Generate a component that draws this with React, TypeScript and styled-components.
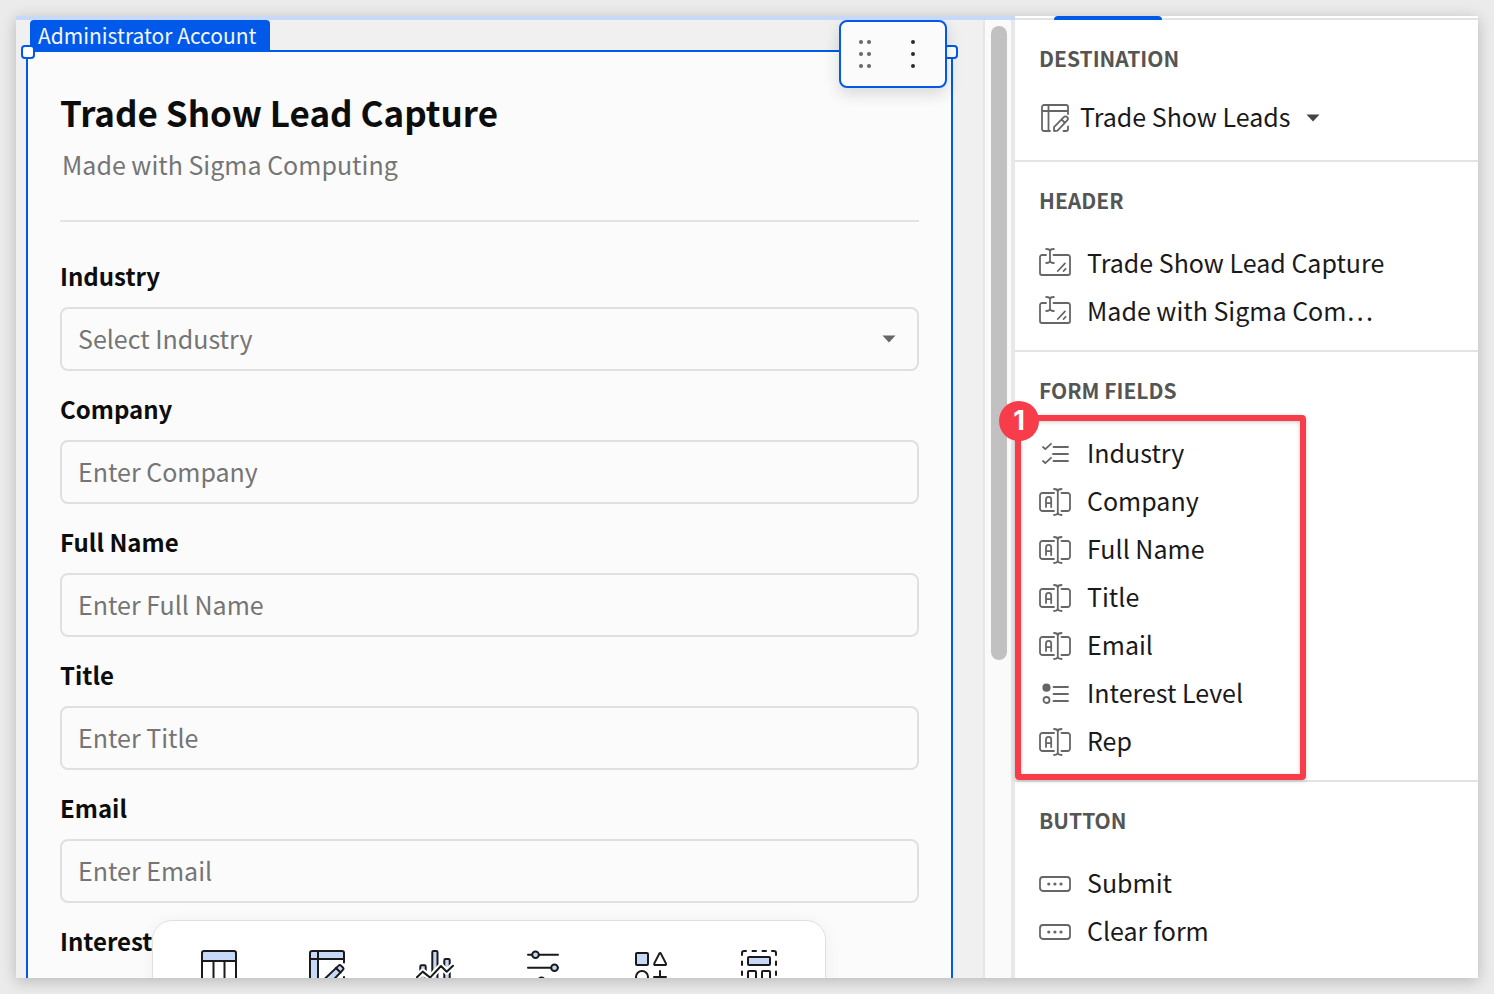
import React from "react";
import styled, { createGlobalStyle } from "styled-components";

const GlobalStyle = createGlobalStyle`
  *, *::before, *::after { box-sizing: border-box; }
  body {
    margin: 0;
    background: #ebebeb;
    color: #1a1a1a;
    font-family: "Noto Sans CJK SC", "Noto Sans", sans-serif;
  }
  button, input, select { font: inherit; color: inherit; }
`;

const BLUE = "#0059e8";
const RED = "#f73d4a";
const LINE = "#e3e3e3";
const TINT = "#c8d8f8";

const Page = styled.div`
  height: 100vh;
  padding: 16px;
`;

const Window = styled.div`
  display: flex;
  height: 100%;
  box-shadow: 0 3px 14px rgba(0, 0, 0, 0.22);
`;

const Workspace = styled.main`
  position: relative;
  display: flex;
  flex: 1;
  min-width: 0;
  overflow: hidden;
  border-top: 4px solid ${TINT};
  background: #f0f0f0;
`;

const Canvas = styled.div`
  flex: 1;
  min-width: 0;
  padding: 0 30px 0 10px;
`;

const ElementTag = styled.div`
  width: fit-content;
  margin-left: 4px;
  padding: 0 13px 0 8px;
  border-radius: 4px 4px 0 0;
  background: ${BLUE};
  color: #f2f6ff;
  font-size: 21px;
  line-height: 30px;
`;

const FormCard = styled.form`
  position: relative;
  height: 1100px;
  padding: 32px;
  border: 2px solid ${BLUE};
  background: #fbfbfb;
`;

const ResizeHandle = styled.span<{ $side: "left" | "right" }>`
  position: absolute;
  top: -7px;
  ${(p) => p.$side}: -7px;
  width: 14px;
  height: 14px;
  border: 2px solid ${BLUE};
  border-radius: 4px;
  background: #fff;
`;

const ElementActions = styled.div`
  position: absolute;
  top: -32px;
  right: 4px;
  display: flex;
  align-items: center;
  gap: 39px;
  width: 108px;
  height: 68px;
  padding-left: 17px;
  border: 2px solid ${BLUE};
  border-radius: 8px;
  background: #fbfbfb;
  box-shadow: 0 6px 16px rgba(0, 0, 0, 0.14);
`;

const IconButton = styled.button`
  display: flex;
  padding: 0;
  border: 0;
  background: none;
`;

const FormTitle = styled.h1`
  margin: 0;
  color: #0d0d0d;
  font-size: 35px;
  font-weight: 700;
  line-height: 56px;
`;

const FormSubtitle = styled.p`
  margin: 4px 0 0 2px;
  color: #757575;
  font-size: 25px;
  line-height: 40px;
`;

const Divider = styled.hr`
  height: 2px;
  margin: 36px 0 34px;
  border: 0;
  background: ${LINE};
`;

const Field = styled.div`
  position: relative;
  display: flex;
  flex-direction: column;
  gap: 11px;
  margin-bottom: 18px;
`;

const FieldLabel = styled.label`
  color: #0d0d0d;
  font-size: 24px;
  font-weight: 700;
  line-height: 40px;
`;

const TextBox = styled.input`
  width: 100%;
  height: 64px;
  padding: 0 16px 2px;
  border: 2px solid #e0e0e0;
  border-radius: 8px;
  background: #fbfbfb;
  font-size: 25px;
  &::placeholder { color: #757575; opacity: 1; }
`;

const SelectBox = styled.select`
  width: 100%;
  height: 64px;
  padding: 0 16px 2px;
  border: 2px solid #e0e0e0;
  border-radius: 8px;
  background: #fbfbfb;
  color: #757575;
  font-size: 25px;
  appearance: none;
`;

const SelectCaret = styled.span`
  position: absolute;
  right: 23px;
  bottom: 28px;
  display: flex;
  pointer-events: none;
`;

const ScrollTrack = styled.div`
  width: 32px;
  padding: 6px 4px 0 6px;
  border-left: 2px solid #e6e6e6;
  border-right: 4px solid #e8e8e8;
  background: #fafafa;
`;

const ScrollThumb = styled.div`
  width: 16px;
  height: 634px;
  border-radius: 8px;
  background: #c1c1c1;
`;

const InsertBar = styled.div`
  position: absolute;
  right: 54px;
  bottom: -42px;
  left: 0;
  display: flex;
  gap: 72px;
  width: fit-content;
  height: 100px;
  margin: 0 auto;
  padding: 29px 48px;
  border: 1px solid #e0e0e0;
  border-radius: 20px;
  background: #fff;
  box-shadow: 0 2px 16px rgba(0, 0, 0, 0.06);
`;

const Sidebar = styled.aside`
  position: relative;
  flex: none;
  width: 463px;
  background: #fff;
`;

const TabStrip = styled.div`
  height: 4px;
  padding-left: 39px;
  box-shadow: inset 0 -2px ${LINE};
`;

const ActiveTab = styled.div`
  width: 108px;
  height: 4px;
  border-radius: 4px 4px 0 0;
  background: ${BLUE};
`;

const Section = styled.section`
  padding: 23px 24px 14px;
  & + & { border-top: 2px solid ${LINE}; }
`;

const SectionTitle = styled.h2`
  margin: 0 0 25px;
  color: #555;
  font-size: 21px;
  font-weight: 700;
  line-height: 30px;
`;

const Destination = styled.button`
  display: flex;
  align-items: center;
  height: 48px;
  margin: -4px 0 4px;
  padding: 0 2px;
  border: 0;
  background: none;
  font-size: 25px;
  white-space: nowrap;
`;

const DestinationName = styled.span`
  margin: 0 16px 0 11px;
  padding-bottom: 4px;
`;

const ItemList = styled.ul`
  position: relative;
  margin: 0;
  padding: 0;
  list-style: none;
`;

const Item = styled.li`
  display: flex;
  align-items: center;
  gap: 16px;
  height: 48px;
  font-size: 25px;
  white-space: nowrap;
`;

const ItemName = styled.span`
  padding-bottom: 4px;
`;

const Callout = styled.li`
  position: absolute;
  top: -15px;
  bottom: -14px;
  left: -24px;
  width: 291px;
  border: 6px solid ${RED};
  border-radius: 4px;
  box-shadow: 0 1px 4px rgba(0, 0, 0, 0.2), inset 0 1px 4px rgba(0, 0, 0, 0.2);
  pointer-events: none;
`;

const CalloutBadge = styled.span`
  position: absolute;
  top: -20px;
  left: -22px;
  width: 40px;
  height: 40px;
  border-radius: 50%;
  background: ${RED};
  color: #fff;
  font-family: Inter, sans-serif;
  font-size: 27px;
  font-weight: 700;
  line-height: 40px;
  text-align: center;
`;

const Caret = ({ color }: { color: string }) => (
  <svg width="14" height="8" viewBox="0 0 14 8" aria-hidden="true">
    <path d="M0.5 0.5h13L7 7.5z" fill={color} />
  </svg>
);

const Glyph = ({ children, size = 32 }: { children: React.ReactNode; size?: number }) => (
  <svg width={size} height={size} viewBox={`0 0 ${size} ${size}`} fill="none" stroke="#666" strokeWidth="1.8" strokeLinecap="round" strokeLinejoin="round" aria-hidden="true">
    {children}
  </svg>
);

const icons = {
  text: (
    <Glyph>
      <path d="M7 7H3a2 2 0 0 0-2 2v16a2 2 0 0 0 2 2h26a2 2 0 0 0 2-2V9a2 2 0 0 0-2-2H14.5" />
      <path d="M7.2 1c2.6 0 3.8.7 3.8 2.2v9.6c0 1.5-1.2 2.2-3.8 2.2M14.8 1C12.2 1 11 1.7 11 3.2M11 12.8c0 1.5 1.2 2.2 3.8 2.2" />
      <path d="M18.8 23l7.2-7.600M24.600 23l2-2.200" />
    </Glyph>
  ),
  input: (
    <Glyph>
      <path d="M15 7H3.500A2.500 2.500 0 0 0 1 9.500v13A2.500 2.500 0 0 0 3.500 25H15" />
      <path d="M22.500 7h6A2.500 2.500 0 0 1 31 9.500v13a2.500 2.500 0 0 1-2.500 2.500h-6" />
      <path d="M15 3c2.600 0 3.800.800 3.800 2.400v21.200c0 1.600-1.200 2.400-3.800 2.400M22.600 3c-2.600 0-3.800.800-3.800 2.400M18.800 26.600c0 1.600 1.200 2.400 3.800 2.400" />
      <path d="M7 21v-7.500a2.600 2.600 0 0 1 5.200 0V21M7 17.200h5.200" />
    </Glyph>
  ),
  checklist: (
    <Glyph>
      <path d="M4 9l2.300 2.200L12 5.800M4 23l2.300 2.200L12 19.800M14.500 9H29M14 16h15M14.500 23H29" />
    </Glyph>
  ),
  radio: (
    <Glyph>
      <circle cx="7.500" cy="9.700" r="3.200" fill="#666" />
      <circle cx="7.500" cy="22" r="3" />
      <path d="M14.500 9H29M14.500 16H29M14.500 23H29" />
    </Glyph>
  ),
  button: (
    <Glyph>
      <rect x="1" y="9" width="30" height="14" rx="3" />
      <g fill="#666" stroke="none">
        <circle cx="9.800" cy="16" r="1.600" />
        <circle cx="15.900" cy="16" r="1.600" />
        <circle cx="22" cy="16" r="1.600" />
      </g>
    </Glyph>
  ),
};

const DestinationIcon = () => (
  <Glyph size={28}>
    <path d="M9 27H3a2 2 0 0 1-2-2V3a2 2 0 0 1 2-2h22a2 2 0 0 1 2 2v7M7.500 1v26M1 7h26" />
    <path d="M13 27v-3.800l9.800-10a2.300 2.300 0 0 1 3.400 0 2.300 2.300 0 0 1 0 3.200L16.500 26.600zM20.600 15.500l3.300 3.300M27 22.500V25a2 2 0 0 1-2 2h-2.500" />
  </Glyph>
);

const ToolGlyph = ({ children }: { children: React.ReactNode }) => (
  <svg width="36" height="36" viewBox="0 0 36 36" overflow="visible" fill="none" stroke="#1a1a1a" strokeWidth="2" strokeLinecap="round" strokeLinejoin="round" aria-hidden="true">
    {children}
  </svg>
);

const tools = [
  {
    name: "Data",
    icon: (
      <ToolGlyph>
        <path d="M1 11V3a2 2 0 0 1 2-2h30a2 2 0 0 1 2 2v8z" fill={TINT} />
        <path d="M1 11v22a2 2 0 0 0 2 2h30a2 2 0 0 0 2-2V11M12.500 11v24M23.500 11v24" />
      </ToolGlyph>
    ),
  },
  {
    name: "Input table",
    icon: (
      <ToolGlyph>
        <path d="M9 35H3a2 2 0 0 1-2-2V3a2 2 0 0 1 2-2h30a2 2 0 0 1 2 2v6H9z" fill={TINT} stroke="none" />
        <path d="M12 35H3a2 2 0 0 1-2-2V3a2 2 0 0 1 2-2h30a2 2 0 0 1 2 2v9.500M9 1v34M1 9h34" />
        <path d="M15 35v-5.500L29.600 15.600q1.200-1.200 2.400 0l1.900 1.900q1.200 1.200 0 2.400L20 34.500z" fill={TINT} />
        <path d="M27 18l4.500 4.500M35 27v6a2 2 0 0 1-2 2h-5" />
      </ToolGlyph>
    ),
  },
  {
    name: "Charts",
    icon: (
      <ToolGlyph>
        <path d="M3.300 35V16.500q0-1.200 1.200-1.200h3q1.200 0 1.200 1.200V35M15.300 35V2.200Q15.300 1 16.500 1h2.800q1.200 0 1.200 1.200V35M27.300 35V10.200q0-1.200 1.200-1.200h3q1.200 0 1.200 1.200V35" fill={TINT} />
        <path d="M0 27.300L5.700 21.600l7.400 6L24 16l5.700 5.700 6.300-6" stroke="#fff" strokeWidth="6" />
        <path d="M0 27.300L5.700 21.600l7.400 6L24 16l5.700 5.700 6.300-6" />
      </ToolGlyph>
    ),
  },
  {
    name: "Controls",
    icon: (
      <ToolGlyph>
        <path d="M3 4.700h30M3 17.700h30M3 30.700h30" />
        <g fill={TINT}>
          <circle cx="10.500" cy="4.700" r="3.300" />
          <circle cx="29.500" cy="17.700" r="3.300" />
          <circle cx="16.500" cy="30.700" r="3.300" />
        </g>
      </ToolGlyph>
    ),
  },
  {
    name: "UI elements",
    icon: (
      <ToolGlyph>
        <rect x="3" y="3" width="12" height="12" rx="1" fill={TINT} />
        <path d="M26.300 3.600q.800-1.200 1.600 0l5 9.800q.500 1.600-1 1.600h-9.600q-1.500 0-1-1.600z" />
        <circle cx="9" cy="27" r="6" />
        <path d="M27 21v12M21 27h12" />
      </ToolGlyph>
    ),
  },
  {
    name: "Layout",
    icon: (
      <ToolGlyph>
        <path d="M1 5V3a2 2 0 0 1 2-2h2M31 1h2a2 2 0 0 1 2 2v2M11.500 1h3.500M21.500 1H25M1 11.500V15M1 21.500V25M35 11.500V15M35 21.500V25M1 31v2a2 2 0 0 0 2 2h2M35 31v2a2 2 0 0 1-2 2h-2" />
        <rect x="7" y="7" width="22" height="8" rx="1" fill={TINT} />
        <rect x="7" y="21" width="8" height="8" rx="1" />
        <rect x="21" y="21" width="8" height="8" rx="1" />
      </ToolGlyph>
    ),
  },
];

const textFields = ["Company", "Full Name", "Title", "Email"];

const formFields: { label: string; icon: keyof typeof icons }[] = [
  { label: "Industry", icon: "checklist" },
  { label: "Company", icon: "input" },
  { label: "Full Name", icon: "input" },
  { label: "Title", icon: "input" },
  { label: "Email", icon: "input" },
  { label: "Interest Level", icon: "radio" },
  { label: "Rep", icon: "input" },
];

export default function App() {
  return (
    <Page>
      <GlobalStyle />
      <Window>
        <Workspace>
          <Canvas>
            <ElementTag>Administrator Account</ElementTag>
            <FormCard>
              <FormTitle>Trade Show Lead Capture</FormTitle>
              <FormSubtitle>Made with Sigma Computing</FormSubtitle>
              <Divider />
              <Field>
                <FieldLabel htmlFor="industry">Industry</FieldLabel>
                <SelectBox id="industry" defaultValue="">
                  <option value="">Select Industry</option>
                </SelectBox>
                <SelectCaret><Caret color="#666" /></SelectCaret>
              </Field>
              {textFields.map((name) => (
                <Field key={name}>
                  <FieldLabel htmlFor={name}>{name}</FieldLabel>
                  <TextBox id={name} type="text" placeholder={`Enter ${name}`} />
                </Field>
              ))}
              <FieldLabel as="div">Interest Level</FieldLabel>
              <ResizeHandle $side="left" />
              <ResizeHandle $side="right" />
              <ElementActions>
                <IconButton type="button" aria-label="Move element">
                  <svg width="14" height="28" viewBox="0 0 14 28" fill="#666">
                    {[2, 14, 26].map((y) => (
                      <React.Fragment key={y}>
                        <circle cx="3" cy={y} r="2" />
                        <circle cx="11" cy={y} r="2" />
                      </React.Fragment>
                    ))}
                  </svg>
                </IconButton>
                <IconButton type="button" aria-label="More options">
                  <svg width="4" height="28" viewBox="0 0 4 28" fill="#2b2b2b">
                    {[2, 14, 26].map((y) => <circle key={y} cx="2" cy={y} r="2" />)}
                  </svg>
                </IconButton>
              </ElementActions>
            </FormCard>
          </Canvas>
          <ScrollTrack>
            <ScrollThumb />
          </ScrollTrack>
          <InsertBar>
            {tools.map((tool) => (
              <IconButton key={tool.name} type="button" aria-label={tool.name}>{tool.icon}</IconButton>
            ))}
          </InsertBar>
        </Workspace>
        <Sidebar>
          <TabStrip>
            <ActiveTab />
          </TabStrip>
          <Section>
            <SectionTitle>DESTINATION</SectionTitle>
            <Destination type="button">
              <DestinationIcon />
              <DestinationName>Trade Show Leads</DestinationName>
              <Caret color="#444" />
            </Destination>
          </Section>
          <Section>
            <SectionTitle>HEADER</SectionTitle>
            <ItemList>
              <Item>{icons.text}<ItemName>Trade Show Lead Capture</ItemName></Item>
              <Item>{icons.text}<ItemName>Made with Sigma Com…</ItemName></Item>
            </ItemList>
          </Section>
          <Section>
            <SectionTitle>FORM FIELDS</SectionTitle>
            <ItemList>
              {formFields.map((field) => (
                <Item key={field.label}>{icons[field.icon]}<ItemName>{field.label}</ItemName></Item>
              ))}
              <Callout>
                <CalloutBadge>1</CalloutBadge>
              </Callout>
            </ItemList>
          </Section>
          <Section>
            <SectionTitle>BUTTON</SectionTitle>
            <ItemList>
              <Item>{icons.button}<ItemName>Submit</ItemName></Item>
              <Item>{icons.button}<ItemName>Clear form</ItemName></Item>
            </ItemList>
          </Section>
        </Sidebar>
      </Window>
    </Page>
  );
}
